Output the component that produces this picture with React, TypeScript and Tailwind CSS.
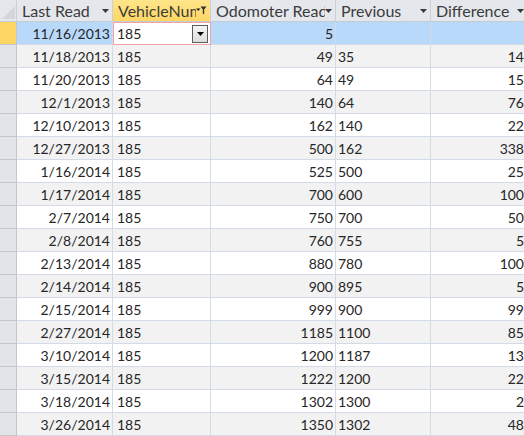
import React from "react";

type Row = [string, string, string, string, string];

const rows: Row[] = [
  ["11/16/2013", "185", "5", "", ""],
  ["11/18/2013", "185", "49", "35", "14"],
  ["11/20/2013", "185", "64", "49", "15"],
  ["12/1/2013", "185", "140", "64", "76"],
  ["12/10/2013", "185", "162", "140", "22"],
  ["12/27/2013", "185", "500", "162", "338"],
  ["1/16/2014", "185", "525", "500", "25"],
  ["1/17/2014", "185", "700", "600", "100"],
  ["2/7/2014", "185", "750", "700", "50"],
  ["2/8/2014", "185", "760", "755", "5"],
  ["2/13/2014", "185", "880", "780", "100"],
  ["2/14/2014", "185", "900", "895", "5"],
  ["2/15/2014", "185", "999", "900", "99"],
  ["2/27/2014", "185", "1185", "1100", "85"],
  ["3/10/2014", "185", "1200", "1187", "13"],
  ["3/15/2014", "185", "1222", "1200", "22"],
  ["3/18/2014", "185", "1302", "1300", "2"],
  ["3/26/2014", "185", "1350", "1302", "48"],
];

function SortArrow() {
  return (
    <svg width="7" height="4" viewBox="0 0 7 4" className="shrink-0">
      <path d="M0 0h7L3.5 4z" fill="#3a3a3a" />
    </svg>
  );
}

function FilterIcon() {
  return (
    <svg width="11" height="9" viewBox="0 0 11 9" className="shrink-0">
      <path d="M0 2.5h4.5L2.25 5z" fill="#222" />
      <path d="M4.5 0.5h6L8.2 3.5v5L6.8 7.5v-4z" fill="#333" />
    </svg>
  );
}

function HeaderCell({
  label,
  w,
  filtered,
}: {
  label: string;
  w: string;
  filtered?: boolean;
}) {
  return (
    <div
      className={`${w} shrink-0 h-full flex items-center pl-[5px] pr-[3px] border-r border-[#c9d0da] overflow-hidden ${
        filtered
          ? "bg-gradient-to-b from-[#ffe58a] to-[#fdd763]"
          : "bg-[#e4e7ec]"
      }`}
    >
      <span className="flex-1 overflow-hidden whitespace-nowrap text-[#3c3c3c] text-[16px]">
        {label}
      </span>
      {filtered ? <FilterIcon /> : <SortArrow />}
    </div>
  );
}

export default function App() {
  return (
    <div
      className="w-[524px] h-[436px] overflow-hidden bg-white text-[14px] text-[#262626]"
      style={{ fontFamily: "Lato, 'Open Sans', sans-serif" }}
    >
      {/* Header */}
      <div className="flex h-[22px] border-b border-[#c5cbd3] w-[600px]">
        <div className="w-[17px] shrink-0 h-full bg-[#e4e7ec] border-r border-[#c9d0da] relative">
          <svg width="14" height="14" viewBox="0 0 14 14" className="absolute left-[2px] top-[5px]">
            <path d="M13 1v13H0z" fill="#d3d7dd" />
          </svg>
        </div>
        <HeaderCell label="Last Read" w="w-[96px]" />
        <HeaderCell label="VehicleNum" w="w-[98px]" filtered />
        <HeaderCell label="Odomoter Reading" w="w-[125px]" />
        <HeaderCell label="Previous" w="w-[95px]" />
        <HeaderCell label="Difference" w="w-[97px]" />
      </div>

      {/* Rows */}
      {rows.map((r, i) => {
        const selected = i === 0;
        const bg = selected
          ? "bg-[#b9d9fb]"
          : i % 2 === 1
          ? "bg-[#f2f2f2]"
          : "bg-white";
        return (
          <div key={i} className="flex h-[23px] w-[600px]">
            <div
              className={`w-[17px] shrink-0 h-full border-r border-b border-[#c3c7cd] ${
                selected ? "bg-[#fdd765]" : "bg-[#e1e4e9]"
              }`}
            />
            <div
              className={`w-[96px] shrink-0 h-full border-r border-b border-[#d2dbe7] ${bg} flex items-center justify-end pr-[2px]`}
            >
              {r[0]}
            </div>
            {selected ? (
              <div className="w-[98px] shrink-0 h-full bg-white border border-[#f4a2aa] flex items-center pl-[3px] pr-[2px]">
                <span className="flex-1">{r[1]}</span>
                <div className="w-[16px] h-[18px] border border-[#5c5c5c] bg-gradient-to-b from-[#f4f4f4] to-[#dcdcdc] flex items-center justify-center">
                  <svg width="7" height="4" viewBox="0 0 7 4">
                    <path d="M0 0h7L3.5 4z" fill="#000" />
                  </svg>
                </div>
              </div>
            ) : (
              <div
                className={`w-[98px] shrink-0 h-full border-r border-b border-[#d2dbe7] ${bg} flex items-center pl-[4px]`}
              >
                {r[1]}
              </div>
            )}
            <div
              className={`w-[125px] shrink-0 h-full border-r border-b border-[#d2dbe7] ${bg} flex items-center justify-end pr-[2px]`}
            >
              {r[2]}
            </div>
            <div
              className={`w-[95px] shrink-0 h-full border-r border-b border-[#d2dbe7] ${bg} flex items-center pl-[2px]`}
            >
              {r[3]}
            </div>
            <div
              className={`w-[97px] shrink-0 h-full border-r border-b border-[#d2dbe7] ${bg} flex items-center justify-end pr-[3px]`}
            >
              {r[4]}
            </div>
          </div>
        );
      })}
    </div>
  );
}
